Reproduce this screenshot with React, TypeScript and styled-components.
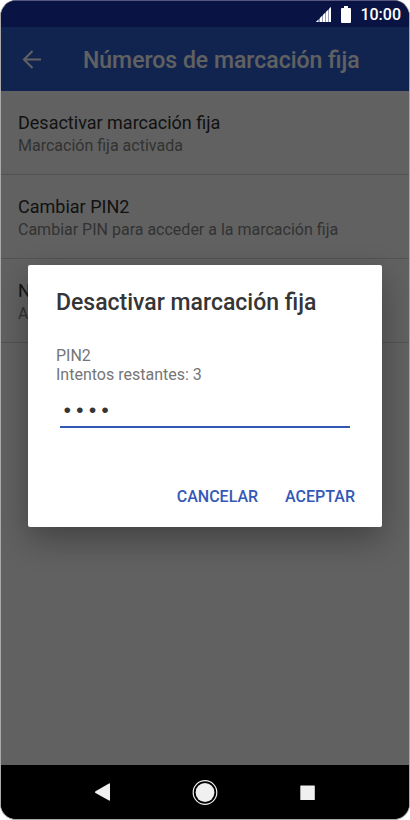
import React, { useState } from "react";
import styled, { createGlobalStyle } from "styled-components";

const GlobalStyle = createGlobalStyle`
  *, *::before, *::after { box-sizing: border-box; }
  body { margin: 0; background: #fff; font-family: Roboto, "Liberation Sans", sans-serif; }
  h1, h2, p, ul { margin: 0; padding: 0; }
  button, input { font: inherit; border: 0; background: none; padding: 0; }
`;

const Phone = styled.div`
  display: flex;
  flex-direction: column;
  min-height: 100vh;
  border: 1px solid #a9a9ab;
  border-top-color: #55577c;
  border-radius: 16px;
  overflow: hidden;
  background: #000;
`;

const StatusBar = styled.header`
  display: flex;
  align-items: center;
  justify-content: flex-end;
  height: 26px;
  padding-right: 8px;
  background: #0a1444;
  color: #fff;
  font-size: 16px;
  font-weight: 500;
`;

const SignalIcon = styled.svg`
  width: 15px;
  height: 15px;
  margin-right: 10px;
`;

const BatteryIcon = styled.svg`
  width: 10px;
  height: 17px;
  margin-right: 9px;
`;

const Screen = styled.div`
  position: relative;
  display: flex;
  flex: 1;
  flex-direction: column;
  background: #fff;
`;

const AppBar = styled.div`
  display: flex;
  align-items: center;
  height: 64px;
  padding-left: 19px;
  background: #2f5fd0;
  color: #fff;
`;

const BackButton = styled.button`
  display: flex;
  width: 24px;
  height: 24px;
  margin-right: 39px;
  color: inherit;
`;

const AppTitle = styled.h1`
  padding-top: 4px;
  font-size: 23px;
  font-weight: 500;
  line-height: 28px;
`;

const SettingsList = styled.ul`
  list-style: none;
`;

const SettingsRow = styled.li`
  height: 84px;
  padding: 20px 17px 0;
  border-bottom: 1px solid #d8d8d8;
`;

const RowTitle = styled.p`
  color: #303030;
  font-size: 18px;
  line-height: 24px;
`;

const RowDetail = styled.p`
  color: #858585;
  font-size: 16px;
  line-height: 22px;
`;

const Scrim = styled.div`
  position: absolute;
  inset: 0;
  display: flex;
  align-items: center;
  padding: 0 27px;
  background: rgba(0, 0, 0, 0.62);
`;

const Dialog = styled.form`
  flex: 1;
  padding: 24px 27px 16px 28px;
  border-radius: 2px;
  background: #fff;
  box-shadow: 0 12px 32px rgba(0, 0, 0, 0.32);
`;

const DialogTitle = styled.h2`
  margin-bottom: 29px;
  color: #353535;
  font-size: 23px;
  font-weight: 500;
  line-height: 28px;
`;

const PinLabel = styled.label`
  display: block;
  color: #757575;
  font-size: 16px;
  line-height: 19px;
`;

const PinInput = styled.input`
  display: block;
  width: calc(100% - 9px);
  height: 36px;
  margin: 8px 5px 55px 4px;
  padding: 4px 0 0 1px;
  border-bottom: 2px solid #3358b4;
  outline: none;
  color: #353535;
  font-family: "Liberation Mono", monospace;
  font-size: 21px;
`;

const Actions = styled.div`
  display: flex;
  justify-content: flex-end;
  gap: 27px;
`;

const ActionButton = styled.button`
  color: #3358b8;
  font-size: 16px;
  font-weight: 500;
  line-height: 28px;
  text-transform: uppercase;
`;

const NavBar = styled.nav`
  display: flex;
  align-items: center;
  justify-content: center;
  gap: 74px;
  height: 54px;
  background: #000;
`;

const NavButton = styled.button`
  display: flex;
  width: 28px;
  height: 28px;
`;

const settings = [
  { title: "Desactivar marcación fija", detail: "Marcación fija activada" },
  { title: "Cambiar PIN2", detail: "Cambiar PIN para acceder a la marcación fija" },
  { title: "N", detail: "A" },
];

export default function App() {
  const [pin, setPin] = useState("0000");
  return (
    <>
      <GlobalStyle />
      <Phone>
        <StatusBar>
          <SignalIcon viewBox="0 0 15 15" aria-hidden="true">
            <path d="M0 15L15 0v15z" fill="#9a9eb8" />
            <path d="M0 15L2 13V15zM4 11L6 9V15H4zM7 8L9 6V15H7zM10 5L12 3V15H10zM13 2L15 0v15h-2z" fill="#fff" />
          </SignalIcon>
          <BatteryIcon viewBox="0 0 10 17" aria-hidden="true">
            <path d="M3 0h4v2h2q1 0 1 1v13q0 1-1 1H1q-1 0-1-1V3q0-1 1-1h2z" fill="#fff" />
          </BatteryIcon>
          <span>10:00</span>
        </StatusBar>
        <Screen>
          <AppBar>
            <BackButton type="button" aria-label="Atrás">
              <svg width="24" height="24" viewBox="0 0 24 24" fill="none" stroke="currentColor" strokeWidth="2">
                <path d="M21 12.500H4M12.500 4L4 12.500l8.500 8.500" />
              </svg>
            </BackButton>
            <AppTitle>Números de marcación fija</AppTitle>
          </AppBar>
          <SettingsList>
            {settings.map((item) => (
              <SettingsRow key={item.title}>
                <RowTitle>{item.title}</RowTitle>
                <RowDetail>{item.detail}</RowDetail>
              </SettingsRow>
            ))}
          </SettingsList>
          <Scrim>
            <Dialog role="dialog" aria-labelledby="dialog-title" onSubmit={(e) => e.preventDefault()}>
              <DialogTitle id="dialog-title">Desactivar marcación fija</DialogTitle>
              <PinLabel htmlFor="pin2">
                PIN2
                <br />
                Intentos restantes: 3
              </PinLabel>
              <PinInput id="pin2" type="password" value={pin} onChange={(e) => setPin(e.target.value)} />
              <Actions>
                <ActionButton type="button">Cancelar</ActionButton>
                <ActionButton type="submit">Aceptar</ActionButton>
              </Actions>
            </Dialog>
          </Scrim>
        </Screen>
        <NavBar>
          <NavButton type="button" aria-label="Volver">
            <svg width="28" height="28" viewBox="0 0 28 28">
              <path d="M6.500 13.300L20 5.500q1-.5 1 .5v16q0 1-1 .5L6.500 15q-1.300-.8 0-1.700z" fill="#f0f0f0" />
            </svg>
          </NavButton>
          <NavButton type="button" aria-label="Inicio">
            <svg width="28" height="28" viewBox="0 0 28 28">
              <circle cx="14" cy="14.500" r="11.800" fill="none" stroke="#f0f0f0" strokeWidth="1.200" />
              <circle cx="14" cy="14.500" r="9.400" fill="#f0f0f0" />
            </svg>
          </NavButton>
          <NavButton type="button" aria-label="Recientes">
            <svg width="28" height="28" viewBox="0 0 28 28">
              <rect x="7.300" y="7.500" width="14.500" height="14.500" rx="0.500" fill="#f0f0f0" />
            </svg>
          </NavButton>
        </NavBar>
      </Phone>
    </>
  );
}
